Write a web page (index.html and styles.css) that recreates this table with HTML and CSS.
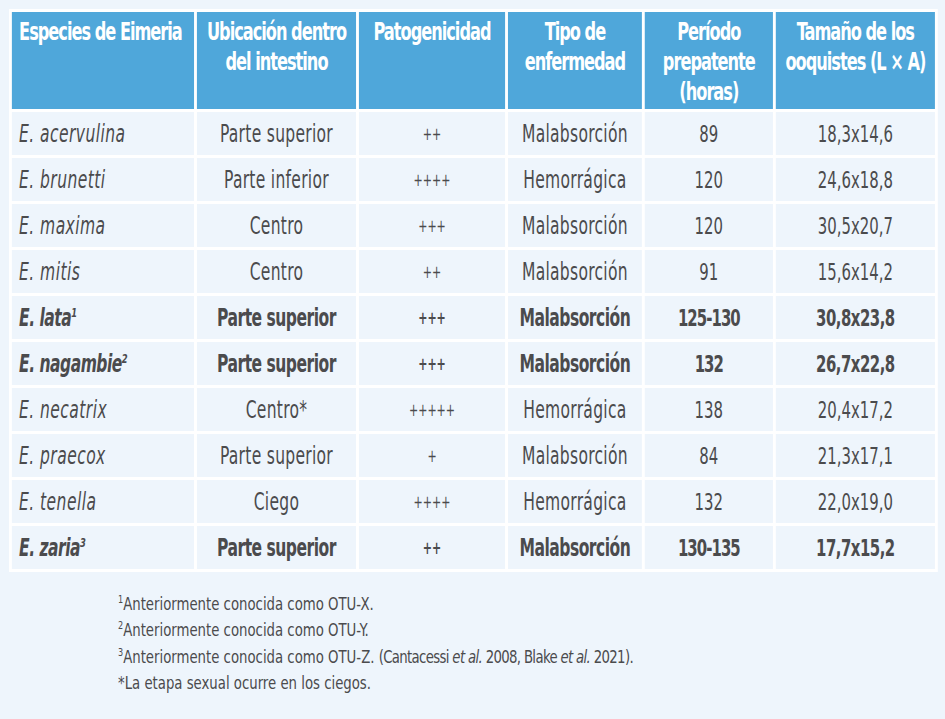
FILE: index.html
```html
<!DOCTYPE html>
<html lang="es">
<head>
<meta charset="utf-8">
<title>Especies de Eimeria</title>
<link rel="stylesheet" href="styles.css">
</head>
<body>
<div class="page">
  <table class="eimeria">
    <colgroup>
      <col class="c1"><col class="c2"><col class="c3"><col class="c4"><col class="c5"><col class="c6">
    </colgroup>
    <thead>
      <tr>
        <th class="first">Especies de Eimeria</th>
        <th>Ubicación dentro<br>del intestino</th>
        <th>Patogenicidad</th>
        <th>Tipo de<br>enfermedad</th>
        <th>Período<br>prepatente<br>(horas)</th>
        <th>Tamaño de los<br>ooquistes (L × A)</th>
      </tr>
    </thead>
    <tbody>
      <tr><td class="sp">E. acervulina</td><td>Parte superior</td><td class="plus">++</td><td>Malabsorción</td><td>89</td><td>18,3x14,6</td></tr>
      <tr><td class="sp">E. brunetti</td><td>Parte inferior</td><td class="plus">++++</td><td>Hemorrágica</td><td>120</td><td>24,6x18,8</td></tr>
      <tr><td class="sp">E. maxima</td><td>Centro</td><td class="plus">+++</td><td>Malabsorción</td><td>120</td><td>30,5x20,7</td></tr>
      <tr><td class="sp">E. mitis</td><td>Centro</td><td class="plus">++</td><td>Malabsorción</td><td>91</td><td>15,6x14,2</td></tr>
      <tr class="strong"><td class="sp">E. lata<sup>1</sup></td><td>Parte superior</td><td class="plus">+++</td><td>Malabsorción</td><td>125-130</td><td>30,8x23,8</td></tr>
      <tr class="strong"><td class="sp">E. nagambie<sup>2</sup></td><td>Parte superior</td><td class="plus">+++</td><td>Malabsorción</td><td>132</td><td>26,7x22,8</td></tr>
      <tr><td class="sp">E. necatrix</td><td>Centro*</td><td class="plus">+++++</td><td>Hemorrágica</td><td>138</td><td>20,4x17,2</td></tr>
      <tr><td class="sp">E. praecox</td><td>Parte superior</td><td class="plus">+</td><td>Malabsorción</td><td>84</td><td>21,3x17,1</td></tr>
      <tr><td class="sp">E. tenella</td><td>Ciego</td><td class="plus">++++</td><td>Hemorrágica</td><td>132</td><td>22,0x19,0</td></tr>
      <tr class="strong"><td class="sp">E. zaria<sup>3</sup></td><td>Parte superior</td><td class="plus">++</td><td>Malabsorción</td><td>130-135</td><td>17,7x15,2</td></tr>
    </tbody>
  </table>
  <div class="notes">
    <p><sup>1</sup>Anteriormente conocida como OTU-X.</p>
    <p><sup>2</sup>Anteriormente conocida como OTU-Y.</p>
    <p><sup>3</sup>Anteriormente conocida como OTU-Z. <span class="cite">(Cantacessi <i>et al.</i> 2008, Blake <i>et al.</i> 2021).</span></p>
    <p>*La etapa sexual ocurre en los ciegos.</p>
  </div>
</div>
</body>
</html>
```
FILE: styles.css
```css
html, body {
  margin: 0;
  padding: 0;
  background: #eef5fc;
}
body {
  font-family: "DejaVu Sans Condensed", "DejaVu Sans", sans-serif;
  font-stretch: condensed;
  color: #4b4b4d;
  overflow: hidden;
}
.page {
  padding: 9px 0 0 9px;
}
/* The typeface of the reference is a narrow condensed face; the table is laid
   out wider and compressed horizontally as a whole. */
.eimeria {
  table-layout: fixed;
  width: 1290px;
  border-collapse: separate;
  border-spacing: 4px 3px;
  background: #ffffff;
  transform: scaleX(0.72);
  transform-origin: left top;
}
.c1 { width: 253px; }
.c2 { width: 221px; }
.c3 { width: 203px; }
.c4 { width: 186px; }
.c5 { width: 178px; }
.c6 { width: 221px; }
.eimeria th {
  background: #4fa7da;
  color: #ffffff;
  font-size: 25px;
  font-weight: bold;
  letter-spacing: -1.4px;
  line-height: 30px;
  height: 97px;
  padding: 5px 2px 0;
  vertical-align: top;
  text-align: center;
  box-sizing: border-box;
  white-space: nowrap;
}
.eimeria th.first {
  text-align: left;
  padding-left: 10px;
}
.eimeria td {
  background: #eef5fc;
  font-size: 24px;
  letter-spacing: 0.4px;
  height: 43px;
  padding: 0 4px;
  text-align: center;
  vertical-align: middle;
  box-sizing: border-box;
  white-space: nowrap;
}
.eimeria td:nth-child(5),
.eimeria td:nth-child(6) {
  font-size: 23px;
  letter-spacing: 0;
}
.eimeria td.sp {
  text-align: left;
  padding-left: 10px;
  font-style: italic;
  letter-spacing: 0.6px;
}
.eimeria td.plus {
  font-size: 17px;
  letter-spacing: 0;
}
.eimeria tr.strong td {
  font-weight: bold;
  letter-spacing: -0.7px;
}
.eimeria tr.strong td:nth-child(5) {
  letter-spacing: -1.3px;
}
.eimeria tr.strong td.plus {
  letter-spacing: 0;
}
.eimeria sup {
  font-size: 13px;
  vertical-align: 9px;
  line-height: 0;
  letter-spacing: 0;
}
.notes {
  margin: 19px 0 0 109px;
  font-size: 18px;
  line-height: 26.3px;
  transform: scaleX(0.82);
  transform-origin: left top;
  white-space: nowrap;
}
.notes p {
  margin: 0;
  height: 26.3px;
}
.notes .cite {
  letter-spacing: -0.8px;
}
.notes sup {
  font-size: 11px;
  vertical-align: 7px;
  line-height: 0;
}
```
